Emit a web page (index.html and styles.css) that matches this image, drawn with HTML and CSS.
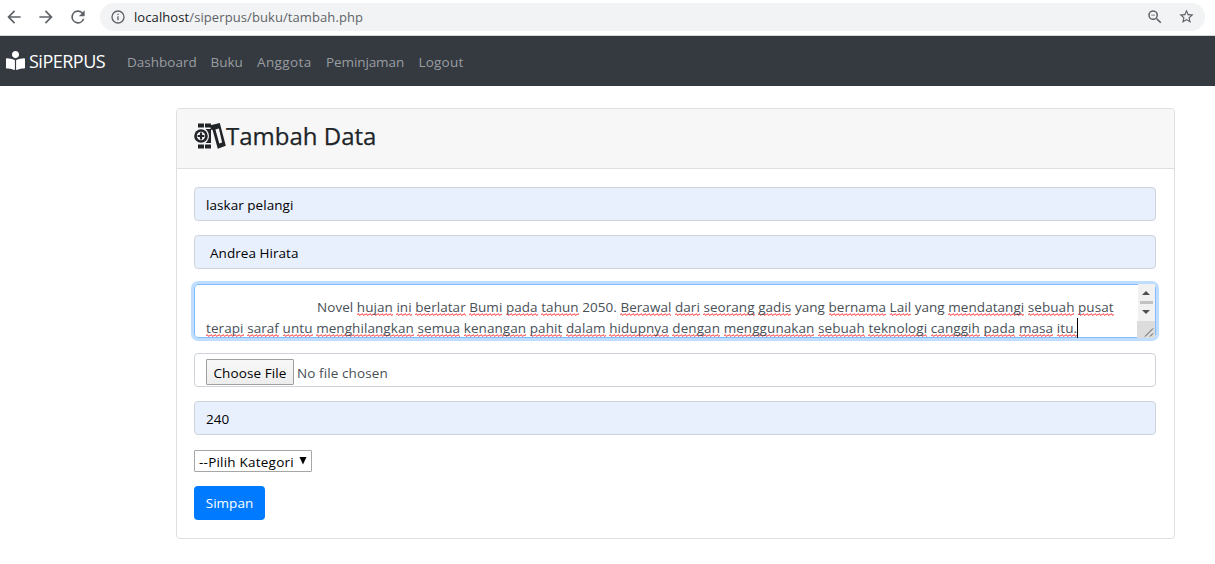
FILE: index.html
```html
<!DOCTYPE html>
<html lang="id">
<head>
<meta charset="utf-8">
<title>SiPERPUS - Tambah Data</title>
<link rel="stylesheet" href="styles.css">
</head>
<body>
<header class="toolbar">
  <svg class="tool" viewBox="0 0 24 24"><path d="M20 11H7.8l5.6-5.6L12 4l-8 8 8 8 1.4-1.4L7.8 13H20z"/></svg>
  <svg class="tool" viewBox="0 0 24 24"><path d="M4 11h12.2l-5.6-5.6L12 4l8 8-8 8-1.4-1.4 5.6-5.6H4z"/></svg>
  <svg class="tool" viewBox="0 0 24 24"><path d="M17.65 6.35A8 8 0 1 0 19.73 14h-2.08A6 6 0 1 1 12 6c1.66 0 3.14.69 4.22 1.78L13 11h7V4z"/></svg>
  <div class="address">
    <svg class="info" viewBox="0 0 24 24"><path d="M11 7h2v2h-2zm0 4h2v6h-2zm1-9a10 10 0 1 0 0 20 10 10 0 0 0 0-20zm0 18a8 8 0 1 1 0-16 8 8 0 0 1 0 16z"/></svg>
    <span class="url"><b>localhost</b>/siperpus/buku/tambah.php</span>
    <svg class="lens" viewBox="0 0 24 24"><path d="M15.5 14h-.79l-.28-.27A6.5 6.5 0 1 0 13.73 14.43l.27.28v.79l5 4.99L20.49 19zm-6 0a4.5 4.5 0 1 1 0-9 4.5 4.5 0 0 1 0 9zM7 9h5v1H7z"/></svg>
    <svg class="star" viewBox="0 0 24 24"><path d="M22 9.24l-7.19-.62L12 2 9.19 8.63 2 9.24l5.46 4.73L5.82 21 12 17.27 18.18 21l-1.63-7.03zM12 15.4l-3.76 2.27 1-4.28-3.32-2.88 4.38-.38L12 6.1l1.71 4.04 4.38.38-3.32 2.88 1 4.28z"/></svg>
  </div>
</header>
<nav class="navbar">
  <a class="brand"><svg class="reader" viewBox="0 0 512 512"><path d="M352 96c0-53.02-42.98-96-96-96s-96 42.98-96 96 42.98 96 96 96 96-42.98 96-96zM233.59 241.1c-59.33-36.32-155.43-46.3-203.79-49.05C13.55 191.13 0 203.51 0 219.14v222.8c0 14.33 11.59 26.28 26.49 27.05 43.66 2.29 131.99 10.68 193.04 41.43 9.37 4.72 20.48-1.71 20.48-11.87V252.56c-.01-4.67-2.32-8.95-6.42-11.46zm248.61-49.05c-48.35 2.74-144.46 12.73-203.78 49.05-4.1 2.51-6.41 6.96-6.41 11.63v245.79c0 10.19 11.14 16.63 20.54 11.9 61.04-30.72 149.32-39.11 192.97-41.4 14.9-.78 26.49-12.73 26.49-27.06V219.14c-.01-15.63-13.56-28.01-29.81-27.09z"/></svg><span>SiPERPUS</span></a>
  <a class="link dashboard">Dashboard</a>
  <a class="link buku">Buku</a>
  <a class="link anggota">Anggota</a>
  <a class="link pinjam">Peminjaman</a>
  <a class="link logout">Logout</a>
</nav>
<main class="card">
  <div class="card-header">
    <svg class="books" viewBox="0 0 32 26"><path d="M4 .5h6v4H4zM11 .5h6v4h-6zM4 21.5h6v4H4zM11 21.5h6v4h-6z"/><circle cx="7" cy="13" r="6.8"/><path d="M11.5 6H17v14h-5.500q3.400-2.800 3.400-7t-3.400-7z"/><circle class="cut" cx="7" cy="13" r="4.200"/><path class="plus" d="M7 9.600v6.800M3.600 13h6.800"/><path fill-rule="evenodd" d="M16.500 2.200 25.800.1l6 22.700-8 3-5.200-18.800-2-.6zM21.400 6.500l3.900 14 2.800-1.100-3.200-13.800z"/></svg>
    <h1>Tambah Data</h1>
  </div>
  <form class="card-body">
    <div class="field filled"><span class="wide">laskar pelangi</span></div>
    <div class="field filled author"><span class="wide">Andrea Hirata</span></div>
    <div class="field summary">
      <div class="text">
        <div class="line first">Novel <u>hujan</u> <u>ini</u> <u>berlatar</u> <u>Bumi</u> <u>pada</u> <u>tahun</u> 2050. <u>Berawal</u> <u>dari</u> <u>seorang</u> <u>gadis</u> yang <u>bernama</u> <u>Lail</u> yang <u>mendatangi</u> <u>sebuah</u> <u>pusat</u></div>
        <div class="line second"><u>terapi</u> <u>saraf</u> <u>untu</u> <u>menghilangkan</u> <u>semua</u> <u>kenangan</u> <u>pahit</u> <u>dalam</u> <u>hidupnya</u> <u>dengan</u> <u>menggunakan</u> <u>sebuah</u> <u>teknologi</u> <u>canggih</u> <u>pada</u> <u>masa</u> <u>itu.</u><i class="caret"></i></div>
      </div>
      <svg class="scroll" viewBox="0 0 18 54"><path fill="#f1f1f1" d="M1 0h17v37H1z"/><path fill="#dcdcdc" d="M0 37h18v17H0z"/><path fill="#505050" d="M5 11h8L9 7zM5 26h8l-4 4z"/><path fill="#c1c1c1" d="M3 17h13v3H3z"/><path stroke="#505050" d="M8 52.500l8-8M13 52.500l3-3"/></svg>
    </div>
    <div class="field file"><span class="choose">Choose File</span><span class="nofile">No file chosen</span></div>
    <div class="field filled"><span>240</span></div>
    <div class="select"><span>--Pilih Kategori</span><svg viewBox="0 0 8 8"><path d="M.5 0h7L4 7.500z"/></svg></div>
    <button class="submit" type="button">Simpan</button>
  </form>
</main>
</body>
</html>
```
FILE: styles.css
```css
* { box-sizing: border-box; }
body { margin: 0; height: 564px; overflow: hidden; background: #fff; color: #212529; font: 13.5px/21px "Open Sans", "Noto Sans", sans-serif; }
svg { display: block; flex: none; }
.toolbar { display: flex; align-items: center; height: 36px; padding: 0 10px 2px 4px; border-bottom: 1px solid #d5d6d8; }
.tool { width: 20px; height: 20px; margin-right: 12px; fill: #5f6368; }
.address { display: flex; align-items: center; flex: 1; height: 28px; padding: 0 10px; border-radius: 14px; background: #f1f3f4; color: #5f6368; }
.info { width: 16px; height: 16px; margin-right: 8px; fill: #5f6368; }
.url { flex: 1; padding-top: 2px; font-size: 13px; letter-spacing: .09px; }
.url b { font-weight: 400; color: #202124; }
.lens { width: 18px; height: 18px; margin-right: 14px; fill: #5f6368; }
.star { width: 17px; height: 17px; fill: #5f6368; }
.navbar { display: flex; align-items: center; height: 50px; padding: 0 6px; background: #343a40; white-space: nowrap; }
.brand { display: flex; align-items: center; width: 121px; color: #fff; font-size: 18px; letter-spacing: -.5px; }
.reader { width: 19px; height: 19px; margin: -1px 4px 0 0; fill: #fff; }
.link { color: #9a9da0; padding-top: 2px; }
.dashboard { width: 83.5px; }
.buku { width: 46.5px; }
.anggota { width: 69px; letter-spacing: .4px; }
.pinjam { width: 92.5px; letter-spacing: -.1px; }
.logout { letter-spacing: .2px; }
.card { width: 999px; height: 431px; margin: 22px 0 0 176px; border: 1px solid #dfdfdf; border-radius: 4px; }
.card-header { display: flex; height: 60px; padding: 13px 17px 0; border-bottom: 1px solid #dfdfdf; background: #f7f7f7; border-radius: 3px 3px 0 0; }
.books { width: 32px; height: 26px; margin-top: 1px; fill: #212529; }
.books .cut { fill: #f7f7f7; }
.books .plus { stroke: #212529; stroke-width: 2.2; }
h1 { margin: 0; font-size: 24px; font-weight: 500; line-height: 28px; -webkit-text-stroke: .25px #212529; }
.card-body { padding: 18px 18px 0 17px; }
.field { display: flex; align-items: center; height: 34px; margin-bottom: 14px; padding: 2px 11px 0; border: 1px solid #ced4da; border-radius: 4px; color: #495057; white-space: nowrap; }
.filled { background: #e8f0fe; color: #000; }
.wide { letter-spacing: .05px; }
.author { padding-left: 15px; }
.summary { height: 54px; margin: 15px 0; padding: 0 0 0 11px; border-color: #80bdff; box-shadow: 0 0 0 3px #bfdeff; align-items: flex-start; justify-content: space-between; }
.text { padding-top: 12px; height: 52px; }
.first { padding-left: 111px; letter-spacing: .049px; }
.second { letter-spacing: .074px; }
u { padding-bottom: 1px; text-decoration: none; background: url("data:image/svg+xml,%3Csvg xmlns='http://www.w3.org/2000/svg' width='4' height='3'%3E%3Cpath d='M-1 3 1 .6 3 2.500 5 .1' fill='none' stroke='%23f33'/%3E%3C/svg%3E") 0 calc(100% - 1px) repeat-x; }
.caret { display: inline-block; width: 1px; height: 20px; background: #000; vertical-align: -5px; }
.scroll { width: 18px; height: 54px; margin-top: -1px; }
.file { padding-top: 4px; }
.nofile { padding-top: 2px; letter-spacing: .1px; }
.choose { width: 88px; height: 26px; margin-right: 3px; border: 1px solid #a0a0a0; border-radius: 1px; background: linear-gradient(#f8f8f8, #ededed); color: #000; line-height: 27px; text-align: center; letter-spacing: .1px; }
.select { display: flex; align-items: center; justify-content: space-between; width: 118px; height: 22px; margin-top: 15px; padding: 3px 4px 0; border: 1px solid #a6a6a6; border-radius: 1px; color: #000; letter-spacing: .22px; white-space: nowrap; }
.select svg { width: 8px; height: 8px; margin-top: -3px; }
.submit { display: block; width: 71px; height: 34px; margin-top: 14px; padding: 1px 0 0; border: 0; border-radius: 4px; background: #007bff; color: #fff; font: inherit; }
```
